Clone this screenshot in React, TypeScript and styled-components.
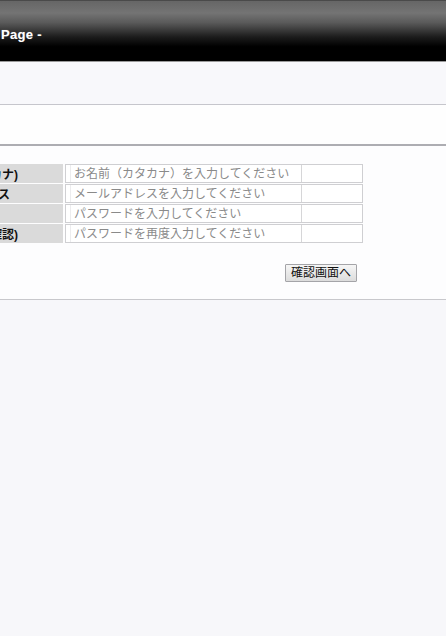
import React from 'react'
import styled, { createGlobalStyle } from 'styled-components'

const GlobalStyle = createGlobalStyle`
  html, body {
    margin: 0;
    padding: 0;
    background: #f7f7fa;
    font-family: "Liberation Sans", "Noto Sans CJK JP", sans-serif;
  }
`

const Page = styled.div`
  width: 446px;
  min-height: 636px;
  overflow: hidden;
  background: #f7f7fa;
`

const Header = styled.header`
  height: 62px;
  box-sizing: border-box;
  display: flex;
  align-items: center;
  padding-top: 7px;
  border-top: 1px solid #4a4a4a;
  border-bottom: 1px solid #9a9a9a;
  background: linear-gradient(
    to bottom,
    #666 0%,
    #747474 20%,
    #5a5a5a 36%,
    #1c1c1c 60%,
    #000 76%,
    #000 100%
  );
`

const Title = styled.h1`
  margin: 0;
  padding: 0 0 0 1px;
  color: #fff;
  font-size: 13px;
  font-weight: bold;
  letter-spacing: 0.3px;
  text-shadow: 0 0 1px rgba(255, 255, 255, 0.4);
`

const Band = styled.div<{ $tone: string; $border: string; $h: number }>`
  height: ${(p) => p.$h}px;
  background: ${(p) => p.$tone};
  border-bottom: ${(p) => p.$border};
`

const Main = styled.main`
  background: #fdfdfe;
  border-bottom: 1px solid #c8c8cc;
  padding: 18px 0 17px;
`

const Form = styled.form`
  display: flex;
  flex-direction: column;
`

const Rows = styled.div`
  display: flex;
  flex-direction: column;
  gap: 1px;
`

const Row = styled.div`
  display: flex;
  gap: 2px;
  height: 19px;
`

/* the page is scrolled sideways in the shot, so the labels start off-screen */
const Label = styled.div`
  width: 63px;
  background: #dadada;
  display: flex;
  align-items: center;
  overflow: hidden;
  white-space: nowrap;
  font-size: 12px;
  font-weight: bold;
  color: #111;
`

const LabelText = styled.span`
  margin-left: -74px;
`

const Field = styled.div`
  width: 298px;
  border: 1px solid #cfcfd2;
  box-sizing: border-box;
  padding: 0 0 0 4px;
  display: flex;
  align-items: stretch;
  background: #fff;
`

const Input = styled.input`
  width: 232px;
  box-sizing: border-box;
  border: none;
  border-right: 1px solid #d6d6d8;
  border-left: 1px solid #ececee;
  padding: 0 3px;
  margin: 0;
  font-family: "Liberation Sans", "Noto Sans CJK JP", sans-serif;
  font-size: 12px;
  color: #333;
  background: #fff;
  outline: none;
  &::placeholder {
    color: #8a8a8a;
  }
`

const Actions = styled.div`
  display: flex;
  padding: 21px 0 0 285px;
`

const Button = styled.button`
  width: 72px;
  height: 18px;
  padding: 0;
  border: 1px solid #a4a4a8;
  border-radius: 1px;
  background: linear-gradient(to bottom, #f6f6f6, #dcdcdc);
  font-family: "Liberation Sans", "Noto Sans CJK JP", sans-serif;
  font-size: 12px;
  color: #111;
  line-height: 16px;
`

const fields = [
  { label: 'お名前(カタカナ)', placeholder: 'お名前（カタカナ）を入力してください', type: 'text' },
  { label: 'メールアドレス', placeholder: 'メールアドレスを入力してください', type: 'email' },
  { label: 'パスワード', placeholder: 'パスワードを入力してください', type: 'password' },
  { label: 'パスワード(確認)', placeholder: 'パスワードを再度入力してください', type: 'password' },
]

export default function App() {
  return (
    <Page>
      <GlobalStyle />
      <Header>
        <Title>Page -</Title>
      </Header>
      <Band $tone="#f8f8fb" $border="1px solid #c6c6cc" $h={42} />
      <Band $tone="#fefefe" $border="2px solid #adadb2" $h={39} />
      <Main>
        <Form onSubmit={(e) => e.preventDefault()}>
          <Rows>
            {fields.map((f) => (
              <Row key={f.placeholder}>
                <Label>
                  <LabelText>{f.label}</LabelText>
                </Label>
                <Field>
                  <Input type={f.type} placeholder={f.placeholder} />
                </Field>
              </Row>
            ))}
          </Rows>
          <Actions>
            <Button type="submit">確認画面へ</Button>
          </Actions>
        </Form>
      </Main>
    </Page>
  )
}
